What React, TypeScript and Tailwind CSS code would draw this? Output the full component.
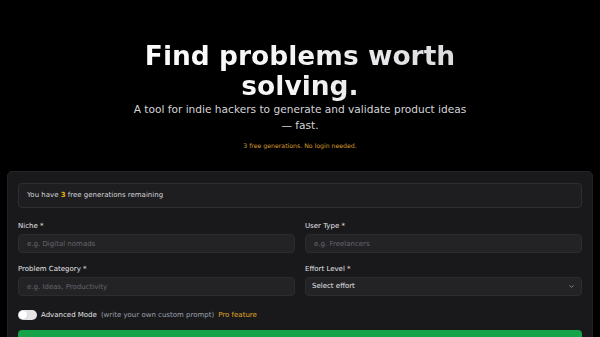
import { ChevronDown } from "lucide-react";

const font = { fontFamily: '"DejaVu Sans", "Liberation Sans", sans-serif' };

function Field({ label, placeholder }: { label: string; placeholder: string }) {
  return (
    <div className="flex flex-col gap-[3px]">
      <label className="text-[7px] leading-[10px] font-medium text-[#e4e4e7]">{label}</label>
      <input
        placeholder={placeholder}
        className="h-[19px] w-full rounded-[4px] border border-[#2c2c30] bg-[#232326] px-[8px] text-[7px] text-[#e4e4e7] placeholder:text-[#66666c] outline-none"
      />
    </div>
  );
}

export default function App() {
  return (
    <div className="h-[337px] w-[600px] overflow-hidden bg-black" style={font}>
      <div className="flex flex-col items-center pt-[41px]">
        <h1 className="w-[400px] text-center text-[26.5px] leading-[30px] font-bold bg-gradient-to-r from-white via-[#f4f4f5] to-[#d4d4d8] bg-clip-text text-transparent">
          Find problems worth solving.
        </h1>
        <p className="mt-0 w-[350px] text-center text-[10.6px] leading-[16px] text-[#d4d4d8]">
          A tool for indie hackers to generate and validate product ideas —&nbsp;fast.
        </p>
        <p className="mt-[8px] text-[6.2px] leading-[9px] text-[#d69e2e]">3 free generations. No login needed.</p>
      </div>

      <div className="mx-[7px] mt-[21px] rounded-[5px] border border-[#232326] bg-[#19191b] px-[10px] pt-[11px] pb-[12px]">
        <div className="flex h-[25px] items-center rounded-[4px] border border-[#2e2e32] bg-[#1e1e21] px-[8px] text-[7px] text-[#d4d4d8]">
          You have&nbsp;<span className="font-bold text-[#eab308]">3</span>&nbsp;free generations remaining
        </div>

        <div className="mt-[13px] grid grid-cols-2 gap-x-[10px] gap-y-[11px]">
          <Field label="Niche *" placeholder="e.g. Digital nomads" />
          <Field label="User Type *" placeholder="e.g. Freelancers" />
          <Field label="Problem Category *" placeholder="e.g. Ideas, Productivity" />
          <div className="flex flex-col gap-[3px]">
            <label className="text-[7px] leading-[10px] font-medium text-[#e4e4e7]">Effort Level *</label>
            <div className="flex h-[19px] items-center justify-between rounded-[4px] border border-[#2c2c30] bg-[#232326] px-[6px] text-[7px] font-medium text-[#e4e4e7]">
              <span>Select effort</span>
              <ChevronDown className="h-[7px] w-[7px] text-[#8a8a90]" strokeWidth={3} />
            </div>
          </div>
        </div>

        <div className="mt-[14px] flex items-center gap-[4px] text-[7px]">
          <div className="flex h-[10px] w-[19px] items-center rounded-full bg-[#e4e4e7] p-[1px]">
            <div className="h-[8px] w-[8px] rounded-full bg-white shadow" />
          </div>
          <span className="font-medium text-[#e4e4e7]">Advanced Mode</span>
          <span className="text-[#9ca3af]">(write your own custom prompt)</span>
          <span className="text-[#e0a526]">Pro feature</span>
        </div>

        <button className="mt-[9px] flex h-[24px] w-full items-center justify-center rounded-[4px] bg-[#16a34a] text-[9px] font-semibold text-white">
          Generate Ideas
        </button>
      </div>
    </div>
  );
}
